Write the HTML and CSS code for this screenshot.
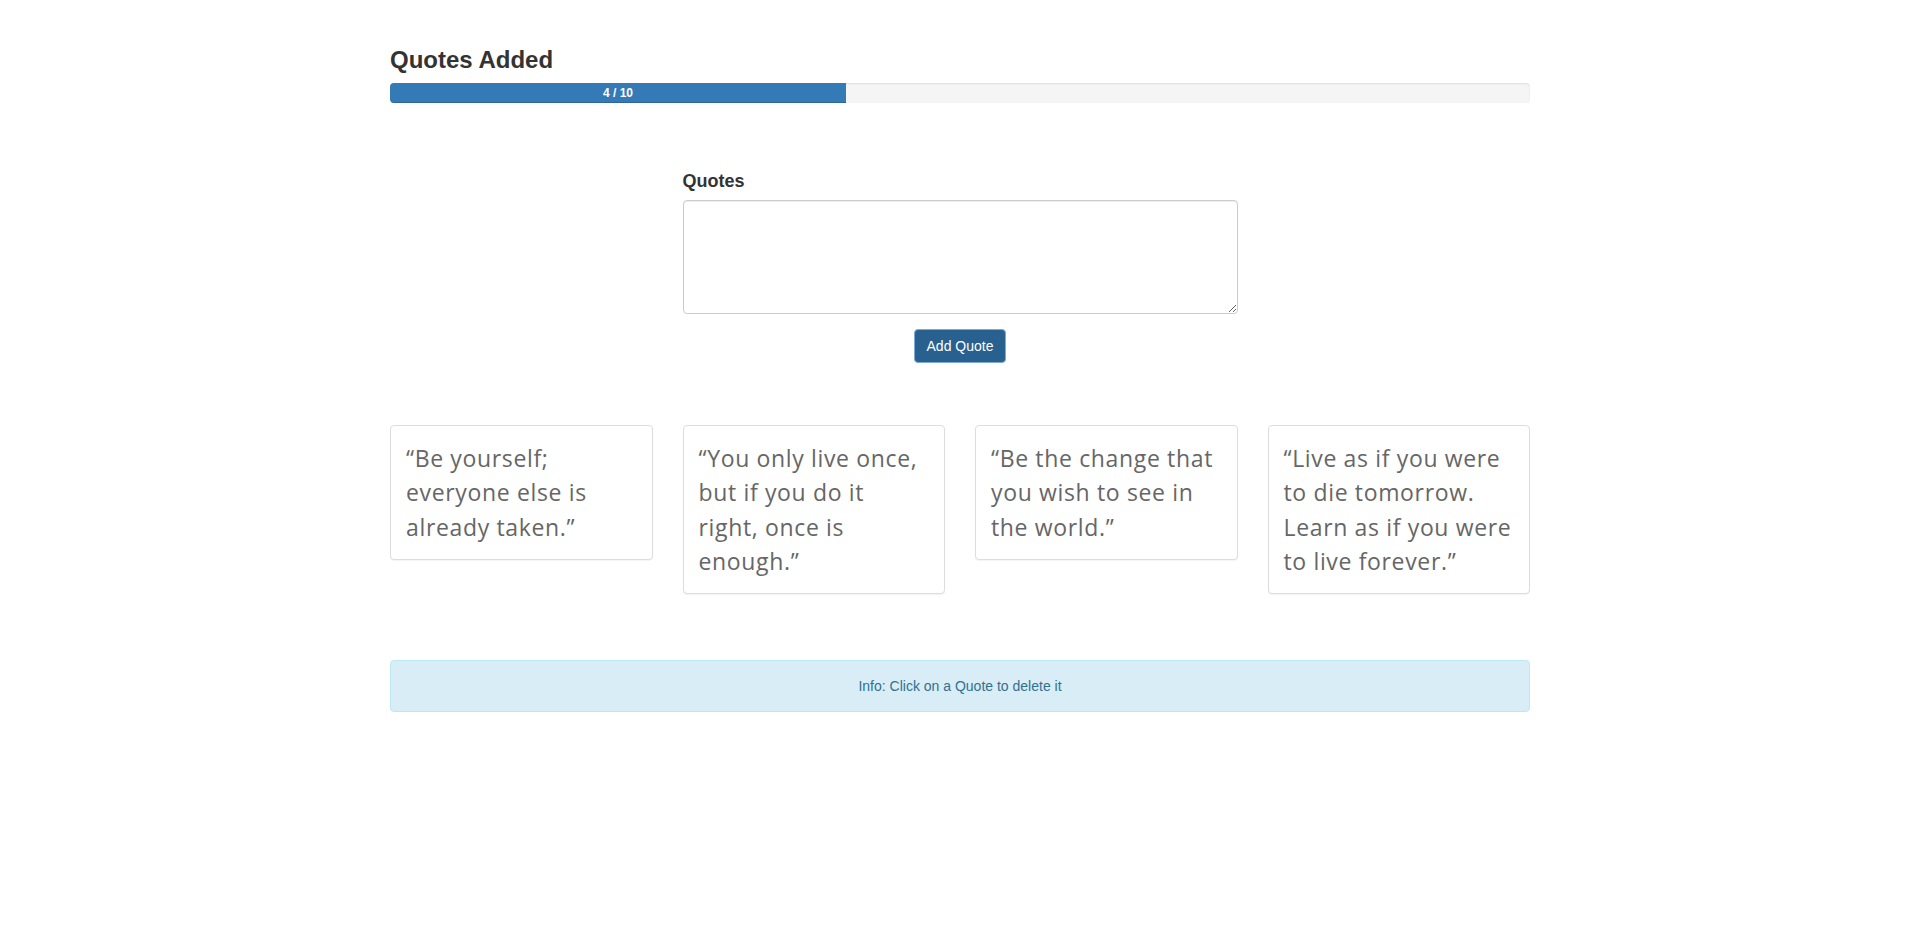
FILE: index.html
```html
<!DOCTYPE html>
<html lang="en">
<head>
<meta charset="utf-8">
<title>Quotes</title>
<link rel="stylesheet" href="styles.css">
</head>
<body>
<div class="container">
  <h3 class="title">Quotes Added</h3>
  <div class="progress">
    <div class="progress-bar" style="width: 40%">4 / 10</div>
  </div>

  <form class="quote-form">
    <label class="form-label" for="quote">Quotes</label>
    <textarea id="quote" class="form-control" rows="5"></textarea>
    <div class="form-actions">
      <button type="button" class="btn">Add Quote</button>
    </div>
  </form>

  <div class="quotes">
    <div class="quote-card">“Be yourself; everyone else is already taken.”</div>
    <div class="quote-card">“You only live once, but if you do it right, once is enough.”</div>
    <div class="quote-card">“Be the change that you wish to see in the world.”</div>
    <div class="quote-card">“Live as if you were to die tomorrow. Learn as if you were to live forever.”</div>
  </div>

  <div class="alert">Info: Click on a Quote to delete it</div>
</div>
</body>
</html>
```

FILE: styles.css
```css
* { box-sizing: border-box; }

html, body {
  margin: 0;
  padding: 0;
  background: #fff;
}

body {
  font-family: "Liberation Sans", Arial, sans-serif;
  font-size: 14px;
  line-height: 1.42857;
  color: #333;
  padding-left: 3px;
}

.container {
  width: 1140px;
  margin: 0 auto;
  padding-top: 27px;
}

.title {
  font-size: 24px;
  font-weight: bold;
  line-height: 1.1;
  margin: 20px 0 10px;
  color: #333;
}

.progress {
  height: 20px;
  background: #f5f5f5;
  border-radius: 4px;
  box-shadow: inset 0 1px 2px rgba(0, 0, 0, 0.1);
  overflow: hidden;
  display: flex;
}

.progress-bar {
  height: 20px;
  background: #337ab7;
  color: #fff;
  font-size: 12px;
  font-weight: bold;
  line-height: 20px;
  text-align: center;
  box-shadow: inset 0 -1px 0 rgba(0, 0, 0, 0.15);
}

.quote-form {
  width: 555px;
  margin: 66px auto 0;
  display: flex;
  flex-direction: column;
}

.form-label {
  font-size: 18px;
  font-weight: bold;
  line-height: 25.7px;
  margin-bottom: 5px;
  color: #333;
}

.form-control {
  display: block;
  width: 100%;
  padding: 6px 12px;
  font-family: inherit;
  font-size: 14px;
  line-height: 20px;
  color: #555;
  background: #fff;
  border: 1px solid #ccc;
  border-radius: 4px;
  box-shadow: inset 0 1px 1px rgba(0, 0, 0, 0.075);
  height: 114px;
  resize: vertical;
  margin: 0;
}

.form-actions {
  display: flex;
  justify-content: center;
  margin-top: 15px;
}

.btn {
  font-family: inherit;
  font-size: 14px;
  line-height: 20px;
  padding: 6px 12px;
  color: #fff;
  background: #286090;
  border: 1px solid #7ea9dc;
  border-radius: 4px;
  cursor: pointer;
  margin: 0;
}

.quotes {
  display: grid;
  grid-template-columns: repeat(4, 1fr);
  column-gap: 30px;
  align-items: start;
  margin-top: 62px;
}

.quote-card {
  border: 1px solid #ddd;
  border-radius: 4px;
  box-shadow: 0 1px 1px rgba(0, 0, 0, 0.05);
  padding: 15px;
  font-family: "Comic Sans MS", "Open Sans", sans-serif;
  font-size: 23px;
  letter-spacing: 0.65px;
  line-height: 34.29px;
  color: #666;
  background: #fff;
  cursor: pointer;
}

.alert {
  margin-top: 66px;
  padding: 15px;
  border: 1px solid #bce8f1;
  border-radius: 4px;
  background: #d9edf7;
  color: #31708f;
  text-align: center;
  font-size: 14px;
  line-height: 20px;
}
```
